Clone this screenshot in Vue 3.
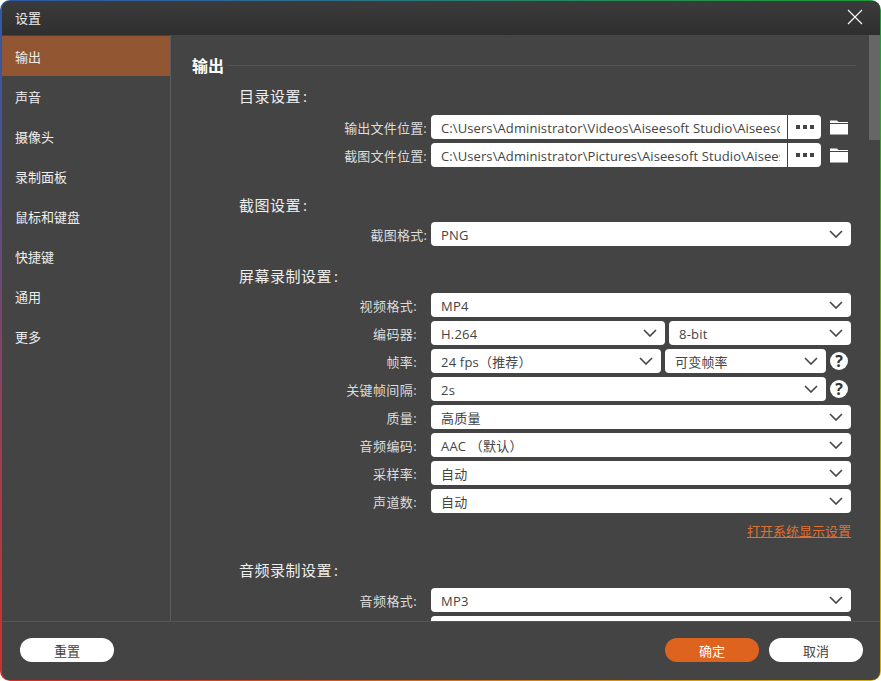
<script setup>
const nav = ['输出', '声音', '摄像头', '录制面板', '鼠标和键盘', '快捷键', '通用', '更多']
const paths = [
  { label: '输出文件位置:', value: 'C:\\Users\\Administrator\\Videos\\Aiseesoft Studio\\Aiseesoft Screen Recorder' },
  { label: '截图文件位置:', value: 'C:\\Users\\Administrator\\Pictures\\Aiseesoft Studio\\Aiseesoft Screen Recorder' }
]
const screenRows = [
  { label: '视频格式:', selects: ['MP4'] },
  { label: '编码器:', selects: ['H.264', '8-bit'], kind: 'codec' },
  { label: '帧率:', selects: ['24 fps（推荐）', '可变帧率'], kind: 'rate', help: true },
  { label: '关键帧间隔:', selects: ['2s'], help: true },
  { label: '质量:', selects: ['高质量'] },
  { label: '音频编码:', selects: ['AAC （默认）'] },
  { label: '采样率:', selects: ['自动'] },
  { label: '声道数:', selects: ['自动'] }
]
</script>

<template>
  <div class="frame">
    <div class="window">
      <header class="titlebar">
        <span>设置</span>
        <svg class="close" width="16" height="16" viewBox="0 0 16 16"><path d="M1 1 15 15M15 1 1 15" stroke="#fff" stroke-width="1.1" fill="none" /></svg>
      </header>
      <div class="body">
        <nav class="sidebar">
          <div v-for="(n, i) in nav" :key="n" class="nav-item" :class="{ active: i === 0 }">{{ n }}</div>
        </nav>
        <main class="main">
          <div class="heading"><span>输出</span><i></i></div>

          <section class="sec first">
            <div class="title">目录设置<span class="colon">:</span></div>
            <div v-for="p in paths" :key="p.label" class="row">
              <label>{{ p.label }}</label>
              <div class="controls">
                <div class="field path"><span class="clip">{{ p.value }}</span></div>
                <button class="more"><b></b><b></b><b></b></button>
                <svg class="folder" width="18" height="16" viewBox="0 0 18 16"><path d="M0 1.5h7l1.500 1.500H18v1H0zM0 5h18v10.500H0z" fill="#fff" /></svg>
              </div>
            </div>
          </section>

          <section class="sec second">
            <div class="title">截图设置<span class="colon">:</span></div>
            <div class="row">
              <label>截图格式:</label>
              <div class="controls">
                <div class="field select"><span>PNG</span><svg width="14" height="8" viewBox="0 0 14 8"><path d="M1 1l6 6 6-6" stroke="#444" stroke-width="1.600" fill="none" /></svg></div>
              </div>
            </div>
          </section>

          <section class="sec third">
            <div class="title">屏幕录制设置<span class="colon">:</span></div>
            <div v-for="r in screenRows" :key="r.label" class="row" :class="r.kind">
              <label>{{ r.label }}</label>
              <div class="controls">
                <div v-for="s in r.selects" :key="s" class="field select"><span>{{ s }}</span><svg width="14" height="8" viewBox="0 0 14 8"><path d="M1 1l6 6 6-6" stroke="#444" stroke-width="1.600" fill="none" /></svg></div>
                <span v-if="r.help" class="help">?</span>
              </div>
            </div>
            <div class="link-row"><a>打开系统显示设置</a></div>
          </section>

          <section class="sec fourth">
            <div class="title">音频录制设置<span class="colon">:</span></div>
            <div class="row">
              <label>音频格式:</label>
              <div class="controls">
                <div class="field select"><span>MP3</span><svg width="14" height="8" viewBox="0 0 14 8"><path d="M1 1l6 6 6-6" stroke="#444" stroke-width="1.600" fill="none" /></svg></div>
              </div>
            </div>
            <div class="row">
              <label></label>
              <div class="controls"><div class="field select"></div></div>
            </div>
          </section>
        </main>
        <div class="scroll"><div class="thumb"></div></div>
      </div>
      <footer class="footer">
        <button class="pill">重置</button>
        <div class="right">
          <button class="pill primary">确定</button>
          <button class="pill">取消</button>
        </div>
      </footer>
    </div>
  </div>
</template>

<style>
html, body { margin: 0; background: #fff; }
</style>

<style scoped>
.frame {
  width: 881px;
  height: 681px;
  box-sizing: border-box;
  padding: 1px 1px 1px 2px;
  border-radius: 10px;
  background: conic-gradient(from 0deg at 50% 50%, #2a7c78 0deg, #1f9a3a 52deg, #d8b012 128deg, #d0302a 232deg, #2f5aa8 308deg, #2a7c78 360deg);
  font-family: "Open Sans", "Noto Sans CJK SC", sans-serif;
  font-size: 13px;
  color: #eee;
}
.window {
  height: 100%;
  display: flex;
  flex-direction: column;
  background: #444;
  border-radius: 8px;
  overflow: hidden;
}
.titlebar {
  flex: 0 0 34px;
  box-sizing: border-box;
  display: flex;
  align-items: center;
  justify-content: space-between;
  padding: 0 17px 2px 13px;
  background: linear-gradient(#3b3b3b, #2f2f2f);
}
.body { flex: 1; min-height: 0; display: flex; border-bottom: 1px solid #555; }
.sidebar { width: 168px; border-right: 1px solid #5c5c5c; flex: none; padding-top: 1px; }
.nav-item { height: 40px; line-height: 42px; padding-left: 13px; }
.nav-item.active { background: #925632; }
.main { flex: 1; min-width: 0; overflow: hidden; padding: 0 18px 0 21px; }
.scroll { width: 11px; flex: none; }
.thumb { height: 105px; background: #666; }
.heading { display: flex; align-items: center; gap: 4px; height: 24px; margin-top: 18px; font-size: 16px; font-weight: 700; color: #fff; margin-right: -5px; }
.heading i { flex: 1; height: 1px; background: #555; }
.sec { padding-left: 47px; }
.first { margin-top: 9px; }
.first .title { margin-bottom: 9px; }
.second { margin-top: 28px; }
.third { margin-top: 20px; }
.fourth { margin-top: 19px; }
.fourth .title { margin-bottom: 8px; }
.title { height: 20px; line-height: 20px; font-size: 15px; letter-spacing: .5px; margin-bottom: 7px; color: #eee; }
.colon { margin-left: 2px; }
.row { display: flex; height: 24px; margin-bottom: 4px; }
.row label { width: 192px; flex: none; box-sizing: border-box; padding-right: 4px; text-align: right; line-height: 26px; color: #ddd; letter-spacing: .2px; }
.third .row label, .fourth .row label { padding-right: 14px; letter-spacing: .4px; }
.controls { width: 420px; flex: none; display: flex; align-items: center; gap: 4px; }
.field {
  box-sizing: border-box;
  height: 24px;
  background: #fff;
  border-radius: 4px;
  padding: 1px 10px 0;
  color: #444;
  display: flex;
  align-items: center;
  justify-content: space-between;
  min-width: 0;
  letter-spacing: .2px;
}
.select { flex: 1; }
.select svg { flex: none; margin-right: -2px; margin-top: -1px; }
.path { width: 356px; flex: none; overflow: hidden; border-radius: 4px 0 0 4px; padding-right: 7px; letter-spacing: .1px; }
.clip { white-space: nowrap; overflow: hidden; }
.more {
  width: 33px; height: 24px; margin-left: -3px; border: 0; padding: 0; background: #fff;
  border-radius: 0 4px 4px 0; display: flex; align-items: center; justify-content: center; gap: 3px;
}
.more b { width: 4px; height: 4px; background: #444; }
.folder { margin-left: 5px; }
.codec .field:first-child { flex: none; width: 234px; }
.rate .field:first-child { flex: none; width: 230px; }
.rate .field:nth-child(2) { flex: 1; }
.help {
  flex: none; width: 18px; height: 18px; border-radius: 50%; background: #fff; color: #333;
  text-align: center; line-height: 18px; font-weight: 700; font-size: 16px; margin-right: 3px;
}
.link-row { width: 612px; height: 20px; margin-top: 8px; text-align: right; line-height: 20px; }
.link-row a { color: #e0702f; text-decoration: underline; }
.footer { flex: 0 0 58px; box-sizing: border-box; display: flex; justify-content: space-between; align-items: flex-start; padding: 16px 17px 0 18px; }
.right { display: flex; gap: 10px; }
.pill {
  width: 94px; height: 24px; padding: 0; border: 0; border-radius: 12px; background: #fff; color: #444;
  font: inherit;
}
.primary { background: #dd631e; color: #fff; }
</style>
